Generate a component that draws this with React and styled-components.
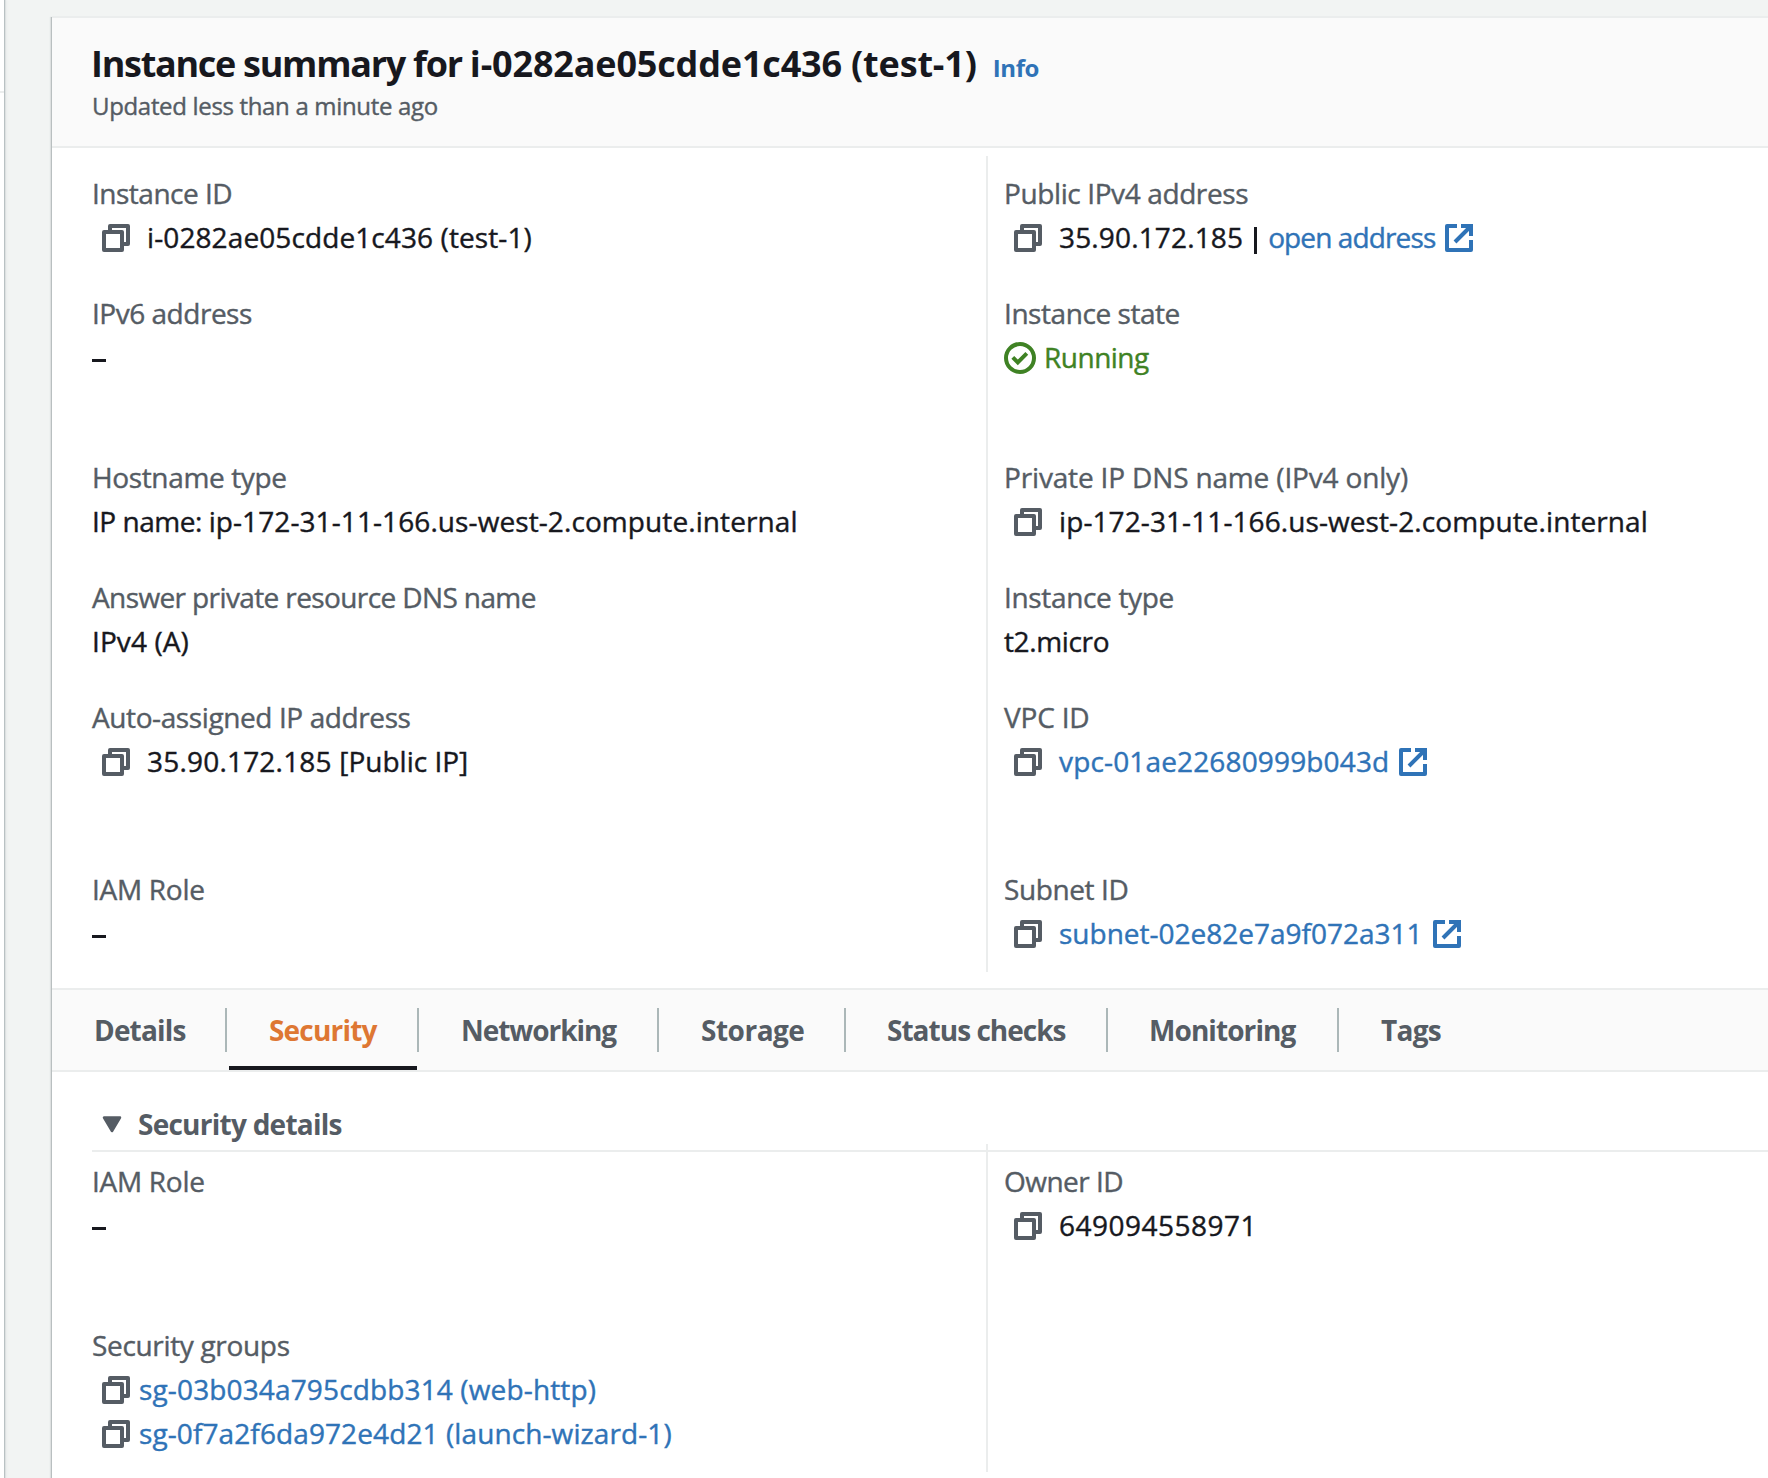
import React from "react";
import styled, { createGlobalStyle } from "styled-components";

const color = {
  page: "#f2f4f3",
  panel: "#ffffff",
  header: "#fafafa",
  line: "#ebeded",
  separator: "#abb7b8",
  text: "#17181e",
  label: "#555c64",
  link: "#2f73b7",
  active: "#de7733",
  ok: "#3f8224",
};

const GlobalStyle = createGlobalStyle`
  *, *::before, *::after { box-sizing: border-box; }
  body {
    margin: 0;
    background: ${color.page};
    color: ${color.text};
    font-family: "Open Sans", "Noto Sans", sans-serif;
    font-size: 28px;
    line-height: 44px;
    -webkit-text-stroke: 0.4px currentColor;
    overflow: hidden;
  }
`;

const Page = styled.div`
  display: flex;
  width: 100vw;
  height: 100vh;
  overflow: hidden;
`;

const NavEdge = styled.div`
  flex: none;
  width: 4px;
  padding-top: 91px;
  background: ${color.panel};
  box-shadow: 1px 0 0 #b9c1c3, 2px 0 0 #dde1e1, 3px 0 2px #e9ecec;
`;

const NavRule = styled.div`
  height: 2px;
  background: ${color.line};
`;

const Card = styled.main`
  flex: 1;
  display: flex;
  flex-direction: column;
  margin: 16px 0 0 48px;
  border-top: 2px solid ${color.line};
  background: ${color.panel};
  box-shadow: -1px 1px 0 #b9bfc0, -2px 1px 1px #dde0e0;
`;

const Header = styled.header`
  height: 130px;
  padding: 22px 40px 0;
  background: ${color.header};
  border-bottom: 2px solid ${color.line};
`;

const TitleRow = styled.div`
  display: flex;
  align-items: baseline;
  -webkit-text-stroke: 0;
`;

const Track = styled.span`
  letter-spacing: ${(p) => p.$ls || 0}px;
  white-space: pre;
`;

const Title = styled.h1`
  margin: 0 0 0 -1px;
  font-size: 36px;
  line-height: 48px;
  font-weight: 700;
  white-space: nowrap;
`;

const InfoLink = styled.a`
  margin-left: 16px;
  color: ${color.link};
  font-size: 24px;
  line-height: 40px;
  font-weight: 700;
  letter-spacing: -0.4px;
`;

const Updated = styled.p`
  margin: 0;
  color: ${color.label};
  font-size: 24px;
  line-height: 36px;
  letter-spacing: -0.33px;
`;

const Columns = styled.section`
  display: grid;
  grid-template-columns: 894px 1fr;
  height: ${(p) => p.$h}px;
  margin-top: ${(p) => p.$lift || 0}px;
  padding: ${(p) => p.$pad};
`;

const Column = styled.dl`
  display: flex;
  flex-direction: column;
  margin: 0;
  padding-top: ${(p) => p.$top}px;
`;

const DividedColumn = styled(Column)`
  padding-left: 16px;
  border-left: 2px solid ${color.line};
`;

const Field = styled.div`
  margin-bottom: ${(p) => p.$gap}px;
`;

const FieldLabel = styled.dt`
  height: 44px;
  color: ${color.label};
`;

const FieldValue = styled.dd`
  display: flex;
  align-items: center;
  height: 44px;
  margin: 0;
  color: ${(p) => (p.$ok ? color.ok : color.text)};
`;

const Link = styled.a`
  display: inline-flex;
  align-items: center;
  color: ${color.link};
`;

const Icon = styled.svg`
  flex: none;
  display: block;
  fill: none;
  margin: ${(p) => p.$m || 0};
`;

const CopyButton = styled.button`
  display: flex;
  flex: none;
  margin: 2px ${(p) => (p.$tight ? 9 : 17)}px 0 10px;
  padding: 0;
  border: 0;
  background: none;
  color: ${color.label};
`;

const Pipe = styled.span`
  width: 3px;
  height: 27px;
  margin: 6px 11px 0 11px;
  background: ${color.text};
`;

const Dash = styled.span`
  width: 14px;
  height: 3px;
  margin-top: 7px;
  background: ${color.text};
`;

const Tabs = styled.nav`
  display: flex;
  height: 84px;
  background: ${color.header};
  border-top: 2px solid ${color.line};
  border-bottom: 2px solid ${color.line};
  -webkit-text-stroke: 0;
`;

const Tab = styled.a`
  display: flex;
  flex: none;
  align-items: flex-start;
  width: ${(p) => p.$w}px;
  height: 80px;
  padding: 18px 0 0 ${(p) => p.$pad}px;
  color: ${(p) => (p.$active ? color.active : color.label)};
  font-weight: 700;
  border-bottom: 4px solid ${(p) => (p.$active ? color.text : "transparent")};
`;

const TabSeparator = styled.span`
  flex: none;
  width: 2px;
  height: 44px;
  margin: 18px ${(p) => p.$after || 0}px 0 0;
  background: ${color.separator};
`;

const SectionHeader = styled.h2`
  display: flex;
  align-items: center;
  height: 80px;
  margin: 0 0 0 40px;
  padding: 26px 0 0 10px;
  border-bottom: 2px solid ${color.line};
  color: ${color.label};
  font-size: 28px;
  font-weight: 700;
  gap: 16px;
  -webkit-text-stroke: 0;
`;

function Copy({ tight }) {
  return (
    <CopyButton $tight={tight} aria-label="Copy">
      <Icon width="28" height="28" viewBox="0 0 28 28" stroke="currentColor" strokeWidth="4" strokeLinejoin="round">
        <path d="M8 7V2h18v18h-5" />
        <path d="M2 8h18v18H2z" />
      </Icon>
    </CopyButton>
  );
}

function External() {
  return (
    <Icon $m="2px 0 0 10px" width="28" height="28" viewBox="0 0 28 28" stroke="currentColor" strokeWidth="4">
      <path d="M12 2H2v24h24V16" strokeLinejoin="round" />
      <path d="M16 2h10v10M26 2L10 18" />
    </Icon>
  );
}

function Check() {
  return (
    <Icon $m="2px 8px 0 0" width="32" height="32" viewBox="0 0 32 32" stroke="currentColor" strokeWidth="4">
      <circle cx="16" cy="16" r="14" />
      <path d="M8.800 15.400l5 5 9-9" />
    </Icon>
  );
}

const left = [
  { label: ["Instance ID", -0.5], copy: true, value: [["i-0282ae05cdde1c436 (test-1)", 0.1]], gap: 32 },
  { label: ["IPv6 address", -0.48], gap: 76 },
  {
    label: ["Hostname type", -0.36],
    value: [["IP name: ", -0.48], ["ip-172-31-11-166.us-west-2.compute.internal", 0.09]],
    gap: 32,
  },
  { label: ["Answer private resource DNS name", -0.61], value: [["IPv4 (A)", 0.1]], gap: 32 },
  { label: ["Auto-assigned IP address", -0.4], copy: true, value: [["35.90.172.185 ", 0.2], ["[Public IP]", 0]], gap: 84 },
  { label: ["IAM Role", -0.28], gap: 0 },
];

const right = [
  {
    label: ["Public IPv4 address", -0.39],
    copy: true,
    value: [["35.90.172.185", 0.15]],
    link: ["open address", -0.88],
    external: true,
    gap: 32,
  },
  { label: ["Instance state", -0.44], ok: true, value: [["Running", -0.5]], gap: 76 },
  {
    label: ["Private IP DNS name (IPv4 only)", -0.16],
    copy: true,
    value: [["ip-172-31-11-166.us-west-2.compute.internal", 0.09]],
    gap: 32,
  },
  { label: ["Instance type", -0.34], value: [["t2.micro", -0.36]], gap: 32 },
  { label: ["VPC ID", -0.2], copy: true, link: ["vpc-01ae22680999b043d", 0.15], external: true, gap: 84 },
  { label: ["Subnet ID", -0.4], copy: true, link: ["subnet-02e82e7a9f072a311", 0], external: true, gap: 0 },
];

const tabs = [
  { text: "Details", ls: -0.84, w: 173, pad: 42 },
  { text: "Security", ls: -0.81, w: 188, pad: 40, active: true },
  { text: "Networking", ls: -1.05, w: 238, pad: 42 },
  { text: "Storage", ls: -0.5, w: 185, pad: 42 },
  { text: "Status checks", ls: -0.98, w: 260, pad: 41 },
  { text: "Monitoring", ls: -0.93, w: 229, pad: 41 },
  { text: "Tags", ls: -0.75, w: 140, pad: 42 },
];

function Text({ t }) {
  return <Track $ls={t[1]}>{t[0]}</Track>;
}

function Item({ label, copy, value, link, external, ok, gap }) {
  return (
    <Field $gap={gap}>
      <FieldLabel><Text t={label} /></FieldLabel>
      <FieldValue $ok={ok}>
        {copy && <Copy />}
        {ok && <Check />}
        {value && value.map((v) => <Text key={v[0]} t={v} />)}
        {value && link && <Pipe />}
        {link && (
          <Link>
            <Text t={link} />
            {external && <External />}
          </Link>
        )}
        {!value && !link && <Dash />}
      </FieldValue>
    </Field>
  );
}

export default function App() {
  return (
    <Page>
      <GlobalStyle />
      <NavEdge><NavRule /></NavEdge>
      <Card>
        <Header>
          <TitleRow>
            <Title>
              <Track $ls={-1.28}>{"Instance summary for "}</Track>
              <Track $ls={-0.17}>i-0282ae05cdde1c436 (test-1)</Track>
            </Title>
            <InfoLink>Info</InfoLink>
          </TitleRow>
          <Updated>Updated less than a minute ago</Updated>
        </Header>
        <Columns $pad="8px 0 16px 40px" $h={840}>
          <Column $top={15}>
            {left.map((f) => <Item key={f.label[0]} {...f} />)}
          </Column>
          <DividedColumn $top={15}>
            {right.map((f) => <Item key={f.label[0]} {...f} />)}
          </DividedColumn>
        </Columns>
        <Tabs>
          {tabs.map((t, i) => (
            <React.Fragment key={t.text}>
              <Tab $w={t.w} $pad={t.pad} $active={t.active}>
                <Track $ls={t.ls}>{t.text}</Track>
              </Tab>
              {i < tabs.length - 1 && <TabSeparator $after={i === 0 ? 2 : 0} />}
            </React.Fragment>
          ))}
        </Tabs>
        <SectionHeader>
          <Icon width="20" height="17" viewBox="0 0 20 17">
            <path d="M2 1.500h16L10 15z" fill="currentColor" stroke="currentColor" strokeWidth="2.500" strokeLinejoin="round" />
          </Icon>
          <Track $ls={-0.75}>Security details</Track>
        </SectionHeader>
        <Columns $pad="0 0 0 40px" $h={328} $lift={-8}>
          <Column $top={15}>
            <Item label={["IAM Role", -0.28]} gap={76} />
            <Field $gap={0}>
              <FieldLabel><Text t={["Security groups", -0.33]} /></FieldLabel>
              <FieldValue>
                <Copy tight />
                <Link><Text t={["sg-03b034a795cdbb314 (web-http)", 0.14]} /></Link>
              </FieldValue>
              <FieldValue>
                <Copy tight />
                <Link><Text t={["sg-0f7a2f6da972e4d21 (launch-wizard-1)", 0.1]} /></Link>
              </FieldValue>
            </Field>
          </Column>
          <DividedColumn $top={15}>
            <Item label={["Owner ID", -0.52]} copy value={[["649094558971", 0.5]]} gap={0} />
          </DividedColumn>
        </Columns>
      </Card>
    </Page>
  );
}
